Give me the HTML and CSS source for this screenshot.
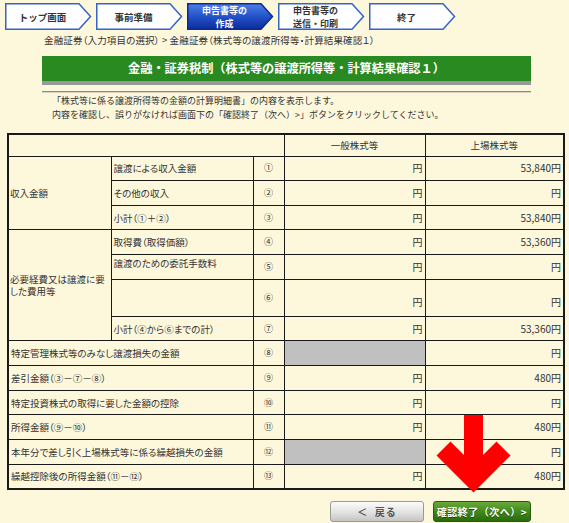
FILE: index.html
```html
<!DOCTYPE html>
<html lang="ja">
<head>
<meta charset="utf-8">
<title>金融・証券税制</title>
<link rel="stylesheet" href="styles.css">
</head>
<body>
<div class="page">
  <nav class="steps">
    <div class="step">
      <svg class="step-bg" viewBox="0 0 87 27" preserveAspectRatio="none"><polygon points="0.75,0.75 74,0.75 85.5,13.5 74,26.25 0.75,26.25"/></svg>
      <span>トップ画面</span>
    </div>
    <div class="step">
      <svg class="step-bg" viewBox="0 0 87 27" preserveAspectRatio="none"><polygon points="0.75,0.75 74,0.75 85.5,13.5 74,26.25 0.75,26.25"/></svg>
      <span>事前準備</span>
    </div>
    <div class="step active two">
      <svg class="step-bg" viewBox="0 0 87 27" preserveAspectRatio="none">
        <defs><linearGradient id="actg" x1="0" y1="0" x2="0" y2="1"><stop offset="0" stop-color="#4d7fe8"/><stop offset="0.5" stop-color="#2452c8"/><stop offset="1" stop-color="#0b2c9c"/></linearGradient></defs>
        <polygon points="0.75,0.75 74,0.75 85.5,13.5 74,26.25 0.75,26.25"/></svg>
      <span>申告書等の<br>作成</span>
    </div>
    <div class="step two">
      <svg class="step-bg" viewBox="0 0 87 27" preserveAspectRatio="none"><polygon points="0.75,0.75 74,0.75 85.5,13.5 74,26.25 0.75,26.25"/></svg>
      <span>申告書等の<br>送信・印刷</span>
    </div>
    <div class="step">
      <svg class="step-bg" viewBox="0 0 87 27" preserveAspectRatio="none"><polygon points="0.75,0.75 74,0.75 85.5,13.5 74,26.25 0.75,26.25"/></svg>
      <span>終了</span>
    </div>
  </nav>

  <div class="crumb">金融証券（入力項目の選択） &gt; 金融証券（株式等の譲渡所得等・計算結果確認１）</div>

  <h1 class="title">金融・証券税制（株式等の譲渡所得等・計算結果確認１）</h1>
  <div class="rule"></div>

  <p class="desc">「株式等に係る譲渡所得等の金額の計算明細書」の内容を表示します。<br>内容を確認し、誤りがなければ画面下の「確認終了（次へ）&gt;」ボタンをクリックしてください。</p>

  <table class="calc">
    <colgroup>
      <col class="c1"><col class="c2"><col class="c3"><col class="c4"><col class="c5">
    </colgroup>
    <tr class="head">
      <th colspan="3"></th>
      <th>一般株式等</th>
      <th>上場株式等</th>
    </tr>
    <tr>
      <td rowspan="3" class="grp">収入金額</td>
      <td>譲渡による収入金額</td>
      <td class="no">①</td>
      <td class="yen">円</td>
      <td class="yen">53,840円</td>
    </tr>
    <tr>
      <td>その他の収入</td>
      <td class="no">②</td>
      <td class="yen">円</td>
      <td class="yen">円</td>
    </tr>
    <tr>
      <td>小計（①＋②）</td>
      <td class="no">③</td>
      <td class="yen">円</td>
      <td class="yen">53,840円</td>
    </tr>
    <tr>
      <td rowspan="4" class="grp">必要経費又は譲渡に要した費用等</td>
      <td>取得費（取得価額）</td>
      <td class="no">④</td>
      <td class="yen">円</td>
      <td class="yen">53,360円</td>
    </tr>
    <tr>
      <td class="top">譲渡のための委託手数料</td>
      <td class="no">⑤</td>
      <td class="yen">円</td>
      <td class="yen">円</td>
    </tr>
    <tr class="tall">
      <td></td>
      <td class="no">⑥</td>
      <td class="yen low">円</td>
      <td class="yen low">円</td>
    </tr>
    <tr>
      <td>小計（④から⑥までの計）</td>
      <td class="no">⑦</td>
      <td class="yen">円</td>
      <td class="yen">53,360円</td>
    </tr>
    <tr>
      <td colspan="2">特定管理株式等のみなし譲渡損失の金額</td>
      <td class="no">⑧</td>
      <td class="gray"></td>
      <td class="yen">円</td>
    </tr>
    <tr>
      <td colspan="2">差引金額（③－⑦－⑧）</td>
      <td class="no">⑨</td>
      <td class="yen">円</td>
      <td class="yen">480円</td>
    </tr>
    <tr>
      <td colspan="2">特定投資株式の取得に要した金額の控除</td>
      <td class="no">⑩</td>
      <td class="yen">円</td>
      <td class="yen">円</td>
    </tr>
    <tr>
      <td colspan="2">所得金額（⑨－⑩）</td>
      <td class="no">⑪</td>
      <td class="yen">円</td>
      <td class="yen">480円</td>
    </tr>
    <tr>
      <td colspan="2">本年分で差し引く上場株式等に係る繰越損失の金額</td>
      <td class="no">⑫</td>
      <td class="gray"></td>
      <td class="yen">円</td>
    </tr>
    <tr>
      <td colspan="2">繰越控除後の所得金額（⑪－⑫）</td>
      <td class="no">⑬</td>
      <td class="yen">円</td>
      <td class="yen">480円</td>
    </tr>
  </table>

  <div class="buttons">
    <button class="btn back">＜&nbsp;&nbsp;戻る</button>
    <button class="btn next">確認終了（次へ）&gt;</button>
  </div>

  <svg class="arrow" width="569" height="523" viewBox="0 0 569 523">
    <polygon points="464,415 483,415 483,455 496.5,441.5 510.5,455.5 473.5,492.5 436.5,455.5 450.5,441.5 464,455" fill="#ff0000"/>
  </svg>
</div>
</body>
</html>
```

FILE: styles.css
```css
* { box-sizing: border-box; }

body {
  margin: 0;
  background: #fdf7dc;
  color: #333;
  font-family: "Noto Sans CJK JP", "Liberation Sans", sans-serif;
  font-size: 9.5px;
}

.page {
  position: relative;
  width: 569px;
  height: 523px;
  overflow: hidden;
}

/* step navigation */
.steps {
  display: flex;
  gap: 4px;
  padding: 3px 0 0 5px;
  height: 30px;
}

.step {
  position: relative;
  width: 87px;
  height: 27px;
  display: flex;
  align-items: center;
  justify-content: center;
  padding-right: 12px;
  font-size: 9.5px;
  line-height: 12px;
  font-weight: bold;
  text-align: center;
  color: #333;
}

.step.two {
  font-size: 9px;
  line-height: 13px;
}

.step-bg {
  position: absolute;
  left: 0;
  top: 0;
  width: 100%;
  height: 100%;
}

.step-bg polygon {
  fill: #fff;
  stroke: #3564c8;
  stroke-width: 1.5;
}

.step.active .step-bg polygon {
  fill: url(#actg);
  stroke: #0a2a90;
}

.step span {
  position: relative;
}

.step.active span {
  color: #fff;
}

/* breadcrumb */
.crumb {
  margin-top: 4px;
  padding-left: 44px;
  line-height: 12px;
  color: #333;
  font-feature-settings: "palt";
  letter-spacing: 0.15px;
}

/* title */
.title {
  margin: 10px 0 0 42px;
  width: 489px;
  height: 29px;
  background: #2a8a22;
  border-bottom: 4px solid #999;
  color: #fff;
  font-size: 12.2px;
  font-weight: bold;
  line-height: 25px;
  text-align: center;
}

.rule {
  margin: 6px 0 0 42px;
  width: 489px;
  height: 2px;
  border-top: 1px solid #8a8a8a;
  border-bottom: 1px solid #d8d4c0;
}

.desc {
  margin: 0;
  padding: 1px 0 0 52px;
  font-size: 9px;
  line-height: 14px;
  color: #333;
}

/* table */
.calc {
  margin: 11px 0 0 7px;
  width: 556px;
  border-collapse: collapse;
  table-layout: fixed;
  border: 2px solid #1a1a1a;
  font-feature-settings: "palt";
}

.c1 { width: 103px; }
.c2 { width: 142px; }
.c3 { width: 31px; }
.c4 { width: 141px; }
.c5 { width: 139px; }

.calc th,
.calc td {
  border: 1px solid #1a1a1a;
  padding: 0 2px;
  height: 24.67px;
  font-weight: normal;
  text-align: left;
  vertical-align: middle;
  line-height: 12px;
  color: #333;
}

.calc tr.head th {
  height: 22px;
  text-align: center;
}

.calc td.grp {
  padding-left: 1px;
}

.calc td.no {
  text-align: center;
  font-size: 9px;
}

.calc td.yen {
  text-align: right;
  padding-right: 2px;
  font-size: 10px;
}

.calc td.top {
  vertical-align: top;
  padding-top: 2px;
}

.calc tr.tall td {
  height: 37px;
}

.calc td.low {
  vertical-align: bottom;
  padding-bottom: 8px;
}

.calc td.gray {
  background: #c0c0c0;
}

/* buttons */
.buttons {
  display: flex;
  justify-content: flex-end;
  gap: 9px;
  margin-top: 11px;
  padding-right: 38px;
}

.btn {
  height: 21px;
  border-radius: 3px;
  font-family: inherit;
  font-size: 10px;
  font-weight: bold;
  padding: 0;
  cursor: pointer;
}

.back {
  width: 94px;
  background: linear-gradient(#fbfbfb, #e2e2e2 55%, #c4c4c4);
  border: 1px solid #9a9a9a;
  color: #555;
  letter-spacing: 1px;
}

.next {
  width: 98px;
  background: linear-gradient(#6aa83a, #3f8a1e 50%, #2a6a0c);
  border: 1px solid #2a5a10;
  color: #fff;
  letter-spacing: 0.5px;
  text-shadow: 0 1px 0 #1c4a06;
}

.arrow {
  position: absolute;
  left: 0;
  top: 0;
  pointer-events: none;
}
```
